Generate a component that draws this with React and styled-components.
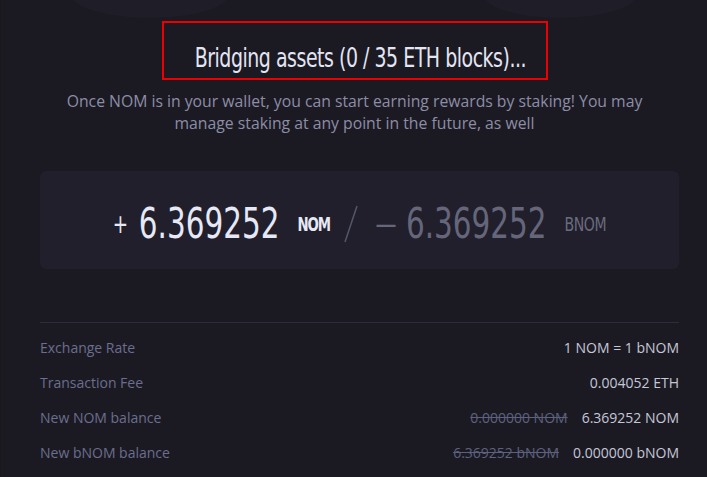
import React from "react";
import styled, { createGlobalStyle } from "styled-components";

const condensed = `"DejaVu Sans Condensed", "DejaVu Sans", sans-serif`;
const body = `"Open Sans", "Noto Sans", "Liberation Sans", sans-serif`;
const squeeze = 0.78;

const GlobalStyle = createGlobalStyle`
    html, body {
        margin: 0;
        padding: 0;
        background: #1b1a23;
    }
    * {
        box-sizing: border-box;
    }
`;

const Page = styled.div`
    width: 707px;
    height: 477px;
    overflow: hidden;
    display: flex;
    flex-direction: column;
    padding: 21px 28px 0 40px;
    background:
        linear-gradient(90deg, #19181f 0, #19181f 1px, transparent 1px),
        radial-gradient(ellipse 80px 24px at 150px -6px, #1e1d28 97%, transparent 100%),
        radial-gradient(ellipse 78px 24px at 560px -6px, #1e1d28 97%, transparent 100%),
        #1b1a23;
`;

const Header = styled.div`
    display: flex;
    flex-direction: column;
    align-items: center;
    padding-right: 10px;
`;

const TitleBox = styled.div`
    width: 386px;
    height: 59px;
    border: 2px solid #ee0000;
    display: flex;
    align-items: flex-end;
    justify-content: center;
    padding: 0 0 7px 12px;
`;

const Title = styled.h1`
    margin: 0;
    font-family: ${condensed};
    font-weight: 400;
    font-size: 27px;
    line-height: 1;
    letter-spacing: -0.6px;
    color: #e4e5f3;
    white-space: nowrap;
    transform: scaleX(${squeeze});
`;

const Subtitle = styled.p`
    margin: 10px 0 0 0;
    width: 600px;
    padding: 0 4px;
    text-align: center;
    font-family: ${body};
    font-size: 15.75px;
    line-height: 22px;
    color: #8d8da6;
`;

const AmountCard = styled.div`
    margin-top: 37px;
    height: 98px;
    border-radius: 6px;
    background: #201f2b;
    display: flex;
    align-items: center;
    justify-content: center;
    gap: 17px;
`;

const AmountSlot = styled.div`
    width: ${({ $w }) => $w}px;
    display: flex;
    justify-content: center;
    padding-top: 8px;
`;

const Amount = styled.div`
    display: flex;
    align-items: center;
    flex-shrink: 0;
    white-space: nowrap;
    transform: scaleX(${squeeze});
    color: ${({ $muted }) => ($muted ? "#65667a" : "#e6e8f5")};
`;

const Figure = styled.span`
    font-family: ${condensed};
    font-size: 42px;
    letter-spacing: 0;
    line-height: 1;
`;

const Sign = styled.span`
    font-family: ${condensed};
    font-size: ${({ $dash }) => ($dash ? 30 : 26)}px;
    margin-right: ${({ $dash }) => ($dash ? 12 : 14)}px;
    line-height: 1;
`;

const Unit = styled.span`
    font-family: ${condensed};
    font-size: ${({ $muted }) => ($muted ? 20 : 19)}px;
    font-weight: ${({ $muted }) => ($muted ? 400 : 700)};
    letter-spacing: ${({ $muted }) => ($muted ? -0.5 : -1.4)}px;
    margin-left: 23px;
    line-height: 1;
    color: ${({ $muted }) => ($muted ? "#6b6b7e" : "#e6e8f5")};
`;

const Slash = styled.svg`
    width: 14px;
    height: 38px;
    margin: 8px 3px 0 0;
    flex-shrink: 0;
`;

const Details = styled.div`
    margin-top: 53px;
    border-top: 1px solid #2d2c3a;
    padding-top: 7px;
    display: flex;
    flex-direction: column;
`;

const Row = styled.div`
    height: 35px;
    display: flex;
    align-items: center;
    justify-content: space-between;
    font-family: ${body};
    font-size: 14px;
`;

const Label = styled.span`
    color: #6b6e8e;
`;

const Values = styled.span`
    display: flex;
    gap: 14px;
    color: #c6c7d7;
`;

const Old = styled.span`
    color: #5d617e;
    text-decoration: line-through;
`;

const rows = [
    { label: "Exchange Rate", value: "1 NOM = 1 bNOM" },
    { label: "Transaction Fee", value: "0.004052 ETH" },
    { label: "New NOM balance", old: "0.000000 NOM", value: "6.369252 NOM" },
    { label: "New bNOM balance", old: "6.369252 bNOM", value: "0.000000 bNOM" },
];

export default function App() {
    return (
        <Page>
            <GlobalStyle />
            <Header>
                <TitleBox>
                    <Title>Bridging assets (0 / 35 ETH blocks)...</Title>
                </TitleBox>
                <Subtitle>
                    Once NOM is in your wallet, you can start earning rewards by staking! You may
                    manage staking at any point in the future, as well
                </Subtitle>
            </Header>

            <AmountCard>
                <AmountSlot $w={212}>
                    <Amount>
                        <Sign>+</Sign>
                        <Figure>6.369252</Figure>
                        <Unit>NOM</Unit>
                    </Amount>
                </AmountSlot>
                <Slash viewBox="0 0 14 38">
                    <line x1="13" y1="1" x2="1" y2="37" stroke="#56566a" strokeWidth="1.5" />
                </Slash>
                <AmountSlot $w={226}>
                    <Amount $muted>
                        <Sign $dash>—</Sign>
                        <Figure>6.369252</Figure>
                        <Unit $muted>BNOM</Unit>
                    </Amount>
                </AmountSlot>
            </AmountCard>

            <Details>
                {rows.map((r) => (
                    <Row key={r.label}>
                        <Label>{r.label}</Label>
                        <Values>
                            {r.old && <Old>{r.old}</Old>}
                            <span>{r.value}</span>
                        </Values>
                    </Row>
                ))}
            </Details>
        </Page>
    );
}
